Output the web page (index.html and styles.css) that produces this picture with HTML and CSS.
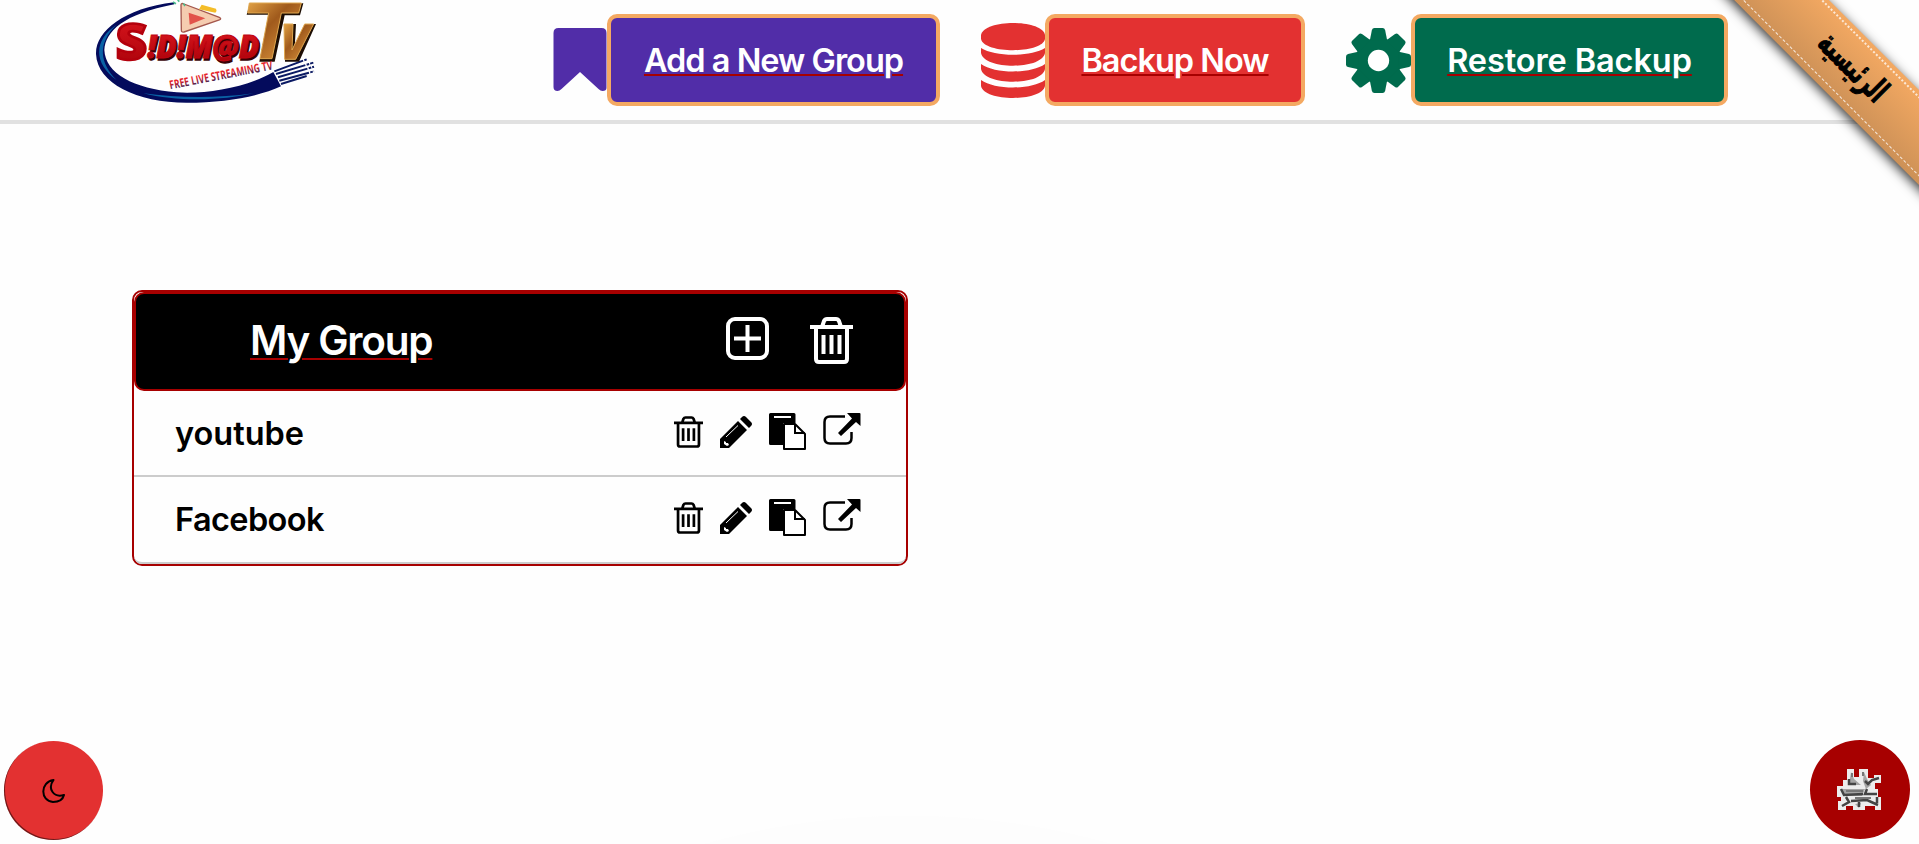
FILE: index.html
```
<!DOCTYPE html>
<html lang="en">
<head>
<meta charset="utf-8">
<title>My Group</title>
<link rel="stylesheet" href="styles.css">
</head>
<body>
<svg class="defs" width="0" height="0">
  <symbol id="trash" viewBox="0 0 43 47">
    <path d="M0 10H43M12 10L14 4Q15 2 17 2H26Q28 2 29 4L31 10M6 10V42Q6 45 9 45H34Q37 45 37 42V10" fill="none" stroke="currentColor" stroke-width="4"/>
    <path d="M13.500 18V37M21.500 18V37M29.500 18V37" stroke="currentColor" stroke-width="4"/>
  </symbol>
  <symbol id="pencil" viewBox="0 0 32 32">
    <path d="M0 32V23L18 5L27 14L9 32ZM20 3L22 1Q24-1 26 1L31 6Q33 8 31 10L29 12Z" fill="currentColor"/>
    <path d="M6 21L18 9.500" stroke="#fff" stroke-width="1"/>
    <path d="M4 25L6 26V27H8L9 29L7 30L4 28Z" fill="#fff"/>
  </symbol>
  <symbol id="paste" viewBox="0 0 37 37">
    <path d="M1.500 0H25Q26.500 0 26.500 1.500V10H14V32H1.500Q0 32 0 30.500V1.500Q0 0 1.500 0Z" fill="currentColor"/>
    <path d="M5 4H22" stroke="#fff" stroke-width="2"/>
    <path d="M15 11H26L36 21V36H15Z" fill="#fff" stroke="currentColor" stroke-width="2" stroke-linejoin="round"/>
    <path d="M26 11V20H36" fill="none" stroke="currentColor" stroke-width="2"/>
  </symbol>
  <symbol id="open" viewBox="0 0 38 32">
    <path d="M22 3.500H7Q1.500 3.500 1.500 9V25Q1.500 30.500 7 30.500H23Q28.500 30.500 28.500 25V19" fill="none" stroke="currentColor" stroke-width="2.500"/>
    <path d="M24 0H36.500Q37.500 0 37.500 1V13L33 9L18 23L15 20L29 5.500Z" fill="currentColor"/>
  </symbol>
</svg>

<header class="topbar">
  <svg class="logo" viewBox="0 0 750 360">
    <defs>
      <linearGradient id="gold" x1="0" y1="0" x2="1" y2="1"><stop offset="0" stop-color="#e0a044"/><stop offset=".4" stop-color="#a05a1c"/><stop offset=".7" stop-color="#c47d30"/><stop offset="1" stop-color="#8c4c14"/></linearGradient>
      <linearGradient id="red" x1="0" y1="0" x2="0" y2="1"><stop offset="0" stop-color="#e01820"/><stop offset="1" stop-color="#a50008"/></linearGradient>
      <linearGradient id="tag" x1="0" y1="0" x2="0" y2="1"><stop offset=".4" stop-color="#e5222a"/><stop offset=".9" stop-color="#10205c"/></linearGradient>
    </defs>
    <path d="M283 7C130 25 46 95 48 162C52 250 170 308 320 308C440 308 540 288 603 259L580 216C500 262 380 283 290 277C160 266 76 220 73 150C76 95 130 42 283 13Z" fill="#040b5c"/>
    <path d="M110 74C40 120 40 190 110 240C60 190 50 130 110 74ZM190 280C290 306 430 302 520 280C410 296 290 294 190 280Z" fill="#0a62a5"/>
    <path d="M583 214L680 178M588 222L700 188M594 232L702 200M598 242L702 214M603 252L680 228" stroke="#0b1a63" stroke-width="6" stroke-dasharray="92 4 8 3"/>
    <path d="M303 15Q303 8 312 12L418 52Q426 56 418 60L312 96Q304 98 304 90Z" fill="#f5ccb0" stroke="#a4574d" stroke-width="4"/>
    <path d="M357 28L365 14L408 26Q412 32 406 38Z" fill="#f4bd28"/>
    <path d="M326 38L376 55L329 74Z" fill="#e2524a"/>
    <path d="M279 6L288 11M293 0L298 5M310 10L315 18" stroke="#4dbb8c" stroke-width="5"/>
    <g class="logo-word">
      <text x="107" y="179" font-size="148" textLength="94" lengthAdjust="spacingAndGlyphs" fill="url(#red)" stroke="#b3000c" stroke-width="8">S</text>
      <text x="206" y="179" font-size="96" font-style="italic" textLength="335" lengthAdjust="spacingAndGlyphs" fill="#380004" stroke="#380004" stroke-width="4">!D!M@D</text>
      <text x="202" y="175" font-size="96" font-style="italic" textLength="335" lengthAdjust="spacingAndGlyphs" fill="url(#red)" stroke="#c00410" stroke-width="3">!D!M@D</text>
    </g>
    <path d="M510 10H670L660 46H614L584 185H538L566 44H500Z" fill="#1d0d03"/>
    <path d="M508 9H664L656 39H604L576 176H540L566 39H503Z" fill="url(#gold)" stroke="#e0a850" stroke-width="3"/>
    <path d="M614 72H648L644 145L677 72H708L657 185H615Z" fill="#1d0d03"/>
    <path d="M612 72H639L636 150L674 72H701L647 178H614Z" fill="url(#gold)" stroke="#e0a850" stroke-width="3"/>
    <text class="logo-tag" x="271" y="268" font-size="36" textLength="314" lengthAdjust="spacingAndGlyphs" transform="rotate(-11 271 268)" fill="url(#tag)">FREE LIVE STREAMING TV</text>
  </svg>
  <nav class="actions">
    <div class="action">
      <svg class="icon-bookmark" viewBox="0 0 53 64"><path d="M5 0H48Q53 0 53 5V60Q53 63 49 63Q47 63 45 61L26.500 44L8 61Q6 63 4 63Q0 63 0 59V5Q0 0 5 0Z" fill="#512da8"/></svg>
      <a class="button button-add"><span>Add a New Group</span></a>
    </div>
    <div class="action">
      <svg class="icon-db" viewBox="0 0 64 75"><g fill="#e33131"><path d="M0 12C3-4 61-4 64 12V16C61 31 3 31 0 16Z"/><path d="M0 25C14 34 50 34 64 25V30C61 47 3 47 0 30Z"/><path d="M0 41C14 51 50 51 64 41V46C61 63 3 63 0 46Z"/><path d="M0 57C14 67 50 67 64 57V63C61 79 3 79 0 63Z"/></g></svg>
      <a class="button button-backup"><span>Backup Now</span></a>
    </div>
    <div class="action">
      <svg class="icon-gear" viewBox="-32 -32 64 64">
        <g fill="#006b4d"><circle r="22.500"/>
          <path id="tooth" d="M-8.500-20L-6.500-30Q-6-32-4-32H4Q6-32 6.500-30L8.500-20Z"/>
          <use href="#tooth" transform="rotate(90)"/><use href="#tooth" transform="rotate(180)"/><use href="#tooth" transform="rotate(270)"/>
          <path id="corner" d="M-8.500-20L-7-30Q-6.500-32-5-32H5Q6.500-32 7-30L8.500-20Z" transform="rotate(45)"/>
          <use href="#corner" transform="rotate(90)"/><use href="#corner" transform="rotate(180)"/><use href="#corner" transform="rotate(270)"/>
        </g><circle r="10.500" fill="#fff"/>
      </svg>
      <a class="button button-restore"><span>Restore Backup</span></a>
    </div>
  </nav>
</header>

<main>
  <section class="group">
    <div class="group-head">
      <h2>My Group</h2>
      <svg class="head-add" viewBox="0 0 43 43"><rect x="2" y="2" width="39" height="39" rx="7" fill="none" stroke="#fff" stroke-width="4"/><path d="M8 21.500H35M21.500 8V35" stroke="#fff" stroke-width="4"/></svg>
      <svg class="head-trash"><use href="#trash"/></svg>
    </div>
    <div class="row">
      <span class="row-name name-youtube">youtube</span>
      <div class="tools"><svg class="t-trash"><use href="#trash"/></svg><svg class="t-pencil"><use href="#pencil"/></svg><svg class="t-paste"><use href="#paste"/></svg><svg class="t-open"><use href="#open"/></svg></div>
    </div>
    <div class="row">
      <span class="row-name name-facebook">Facebook</span>
      <div class="tools"><svg class="t-trash"><use href="#trash"/></svg><svg class="t-pencil"><use href="#pencil"/></svg><svg class="t-paste"><use href="#paste"/></svg><svg class="t-open"><use href="#open"/></svg></div>
    </div>
  </section>
</main>

<div class="ribbon-clip"><a class="ribbon" lang="ar" dir="rtl"><span>الرئيسية</span></a></div>

<button class="fab fab-theme" aria-label="Dark mode"><svg viewBox="0 0 23 24"><path d="M11.500 1C-2 3-2 22 11 23C17 23 21 20 22 16C12 19 5 10 11.500 1Z" fill="none" stroke="#000" stroke-width="2" stroke-linejoin="round"/></svg></button>
<button class="fab fab-menu" aria-label="Menu">
  <svg viewBox="0 0 44 41">
    <path d="M10 0H17V8H22V0H31V9H37V6H44V14H38V20H41V28H44V41H38V37H28V41H16V37H9V41H1V32H4V28H0V17H6V11H10Z" fill="#ececec"/>
    <path d="M12 16L14 3L17 10L24 16ZM27 3L30 10L34 16L29 20L26 12ZM6 24L4 20L28 20L25 27L8 27ZM18 35L24 34L22 39Z" fill="#a4a4a4"/>
    <path d="M12 10V15H19M28 12L31 15L35 11L42 9M4 20L7 26L26 25M30 20L28 25L40 25M9 28L12 33L5 37M14 32L30 31L41 36M22 33V38M40 28V34" fill="none" stroke="#444" stroke-width="2.500"/>
    <path d="M15 4V8M26 3V7M9 22H26M18 29H34" stroke="#777" stroke-width="2"/>
  </svg>
</button>
</body>
</html>
```
FILE: styles.css
```
* { box-sizing: border-box; }

body {
  margin: 0;
  height: 844px;
  overflow: hidden;
  position: relative;
  font-family: Inter, "Liberation Sans", sans-serif;
  font-weight: 600;
  color: #000;
  background: radial-gradient(circle at 908px 1566px, #fdfdfd 750px, #fefefe 750.5px);
}

svg { display: block; flex: none; }
.defs { position: absolute; }

.topbar {
  display: flex;
  height: 124px;
  padding-left: 80px;
  background: #fefefe;
  border-bottom: 4px solid #e1e1e1;
}
.logo { width: 250px; height: 120px; }
.logo-word { font-family: "Open Sans", sans-serif; font-weight: 800; }
.logo-tag { font-family: "Open Sans", sans-serif; font-weight: 700; }

.actions { display: flex; gap: 41px; margin-left: 223px; height: 120px; }
.action { display: flex; align-items: center; }
.icon-bookmark { width: 54px; height: 64px; }
.icon-db { width: 64px; height: 75px; }
.icon-gear { width: 65px; height: 65px; }

.button {
  display: flex;
  align-items: center;
  justify-content: center;
  height: 92px;
  border: 4px solid #f4a962;
  border-radius: 10px;
  color: #fff;
  font-size: 32.500px;
  white-space: nowrap;
  text-decoration: underline;
  text-decoration-color: #a70000;
  text-decoration-thickness: 2px;
  text-underline-offset: 2px;
}
.button-add { width: 333px; background: #512da8; letter-spacing: -1px; }
.button-backup { width: 260px; background: #e33131; letter-spacing: -1px; }
.button-restore { width: 317px; background: #006b4d; letter-spacing: -0.1px; }

main { padding: 166px 0 0 132px; }
.group {
  width: 776px;
  height: 276px;
  border: 2px solid #a70000;
  border-radius: 10px;
}
.group-head {
  display: flex;
  height: 99px;
  padding: 23px 51px 0 114px;
  background: #000;
  color: #fff;
  border: 2px solid #a70000;
  border-radius: 10px;
}
.group-head h2 {
  width: 476px;
  margin: 0;
  font-size: 40.500px;
  font-weight: 600;
  line-height: 48px;
  letter-spacing: -1.2px;
  text-decoration: underline;
  text-decoration-color: #a70000;
  text-decoration-thickness: 2px;
  text-underline-offset: 3px;
}
.head-add { width: 43px; height: 43px; margin-right: 41px; }
.head-trash { width: 43px; height: 47px; }

.row {
  display: flex;
  justify-content: space-between;
  height: 86.400px;
  padding: 0 45px 0 41px;
  border-bottom: 2px solid #ccc;
}
.row:last-child { border-radius: 0 0 8px 8px; }
.row-name { font-size: 32.500px; line-height: 86px; }
.name-facebook { letter-spacing: -0.6px; }
.tools { display: flex; padding-top: 22px; }
.t-trash { width: 29px; height: 32px; margin: 3px 17px 0 0; }
.t-pencil { width: 32px; height: 32px; margin: 3px 17px 0 0; }
.t-paste { width: 37px; height: 37px; margin-right: 17px; }
.t-open { width: 38px; height: 32px; }

.ribbon-clip {
  position: absolute;
  top: 0;
  right: 0;
  width: 240px;
  height: 240px;
  overflow: hidden;
}
.ribbon {
  position: absolute;
  left: -28px;
  top: 36px;
  width: 400px;
  height: 67px;
  transform: rotate(45deg);
  background: linear-gradient(#f4a962, #cd9157);
  box-shadow: 0 3px 12px rgba(0, 0, 0, .8);
  color: #000;
  font: bold 33px/60px "DejaVu Sans", sans-serif;
  text-align: center;
}
.ribbon span {
  display: inline-block;
  transform: scaleX(.61);
  -webkit-text-stroke: 1px #000;
}
.ribbon::after {
  content: "";
  position: absolute;
  inset: 4px 0 6px;
  border-top: 2px dotted rgba(255, 255, 255, .75);
  border-bottom: 1px dashed rgba(255, 255, 255, .8);
}

.fab {
  position: absolute;
  display: flex;
  align-items: center;
  justify-content: center;
  padding: 0;
  border: 0;
  border-radius: 50%;
}
.fab-theme { left: 4px; top: 741px; width: 99px; height: 99px; background: #e33131; box-shadow: inset 1px -1px 0 rgba(0, 0, 0, .5); }
.fab-theme svg { width: 23px; height: 24px; }
.fab-menu { left: 1810px; top: 740px; width: 100px; height: 99px; background: #a70000; }
.fab-menu svg { width: 44px; height: 41px; margin-right: 2px; }
```
